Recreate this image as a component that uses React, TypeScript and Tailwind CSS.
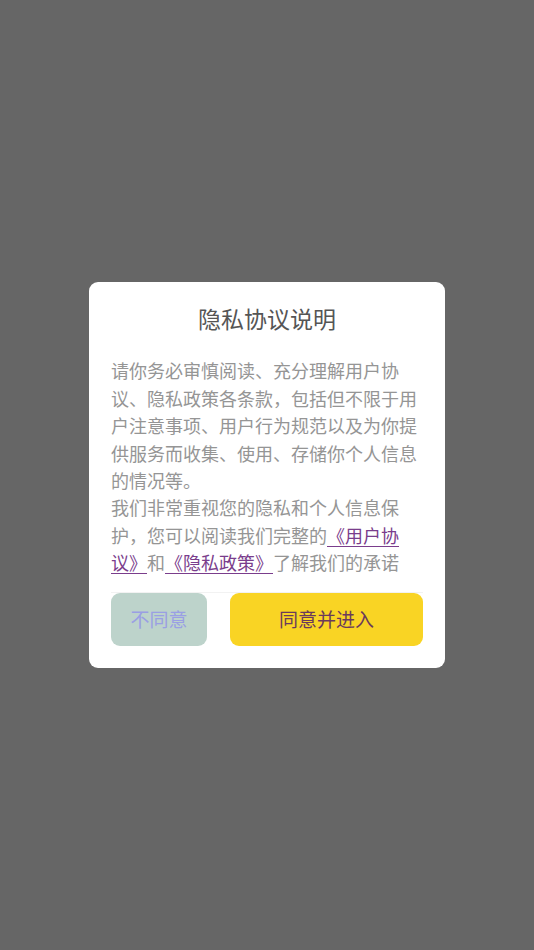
export default function App() {
  return (
    <div
      className="flex h-[950px] w-full items-center justify-center bg-[#666666] [text-spacing-trim:space-all]"
      style={{ fontFamily: '"Noto Sans CJK SC", "Noto Sans", sans-serif' }}
    >
      <div className="w-[356px] rounded-[9px] bg-white px-[22px] pt-[21px] pb-[22px]">
        <h1 className="text-center text-[23px] leading-[30px] font-normal text-[#555555]">
          隐私协议说明
        </h1>

        <div className="mt-[24px] text-[18px] leading-[27.4px] text-[#959595]">
          <p>
            请你务必审慎阅读、充分理解用户协议、隐私政策各条款，包括但不限于用户注意事项、用户行为规范以及为你提供服务而收集、使用、存储你个人信息的情况等。
          </p>
          <p>
            我们非常重视您的隐私和个人信息保护，您可以阅读我们完整的
            <span className="text-[#7a3d8c] underline underline-offset-[3px]">《用户协议》</span>
            和
            <span className="text-[#7a3d8c] underline underline-offset-[3px]">《隐私政策》</span>
            了解我们的承诺
          </p>
        </div>

        <div className="mt-[15px] flex gap-[23px] border-t border-[#f2f2f2]">
          <button className="h-[53px] w-[96px] rounded-[9px] bg-[#bdd3cb] text-[19px] text-[#9a9fe4]">
            不同意
          </button>
          <button className="h-[53px] flex-1 rounded-[9px] bg-[#f9d424] text-[19px] text-[#6b3a5c]">
            同意并进入
          </button>
        </div>
      </div>
    </div>
  );
}
